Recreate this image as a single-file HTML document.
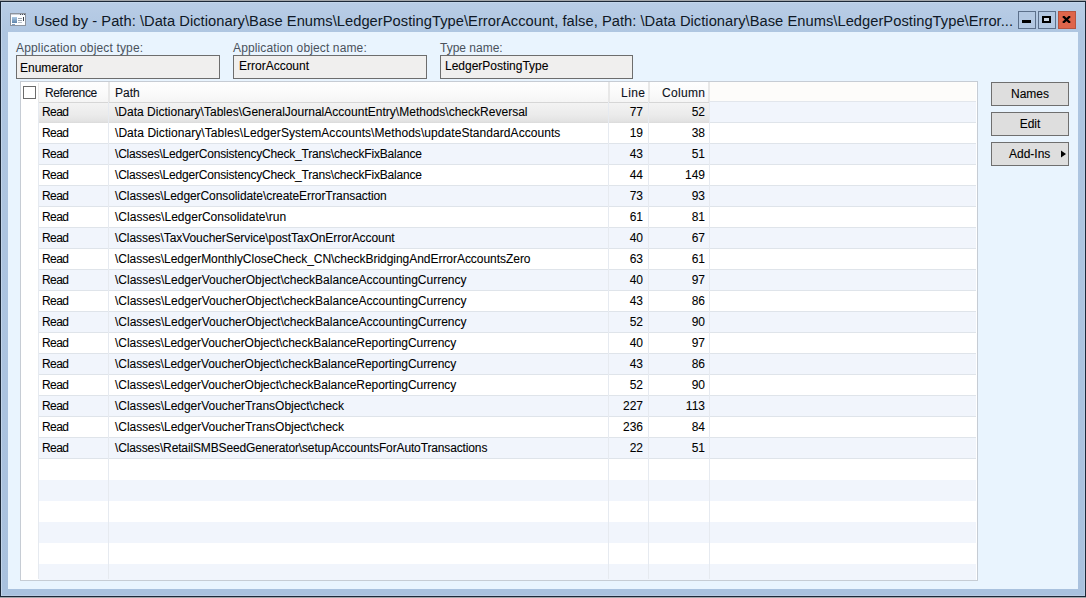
<!DOCTYPE html>
<html><head><meta charset="utf-8">
<style>
html,body{margin:0;padding:0;}
body{width:1086px;height:598px;position:relative;overflow:hidden;background:#a3a6aa;font-family:"Liberation Sans",sans-serif;}
.win{position:absolute;left:0;top:1px;width:1086px;height:596px;background:#1c2838;}
.frame{position:absolute;left:1px;top:2px;width:1084px;height:594px;background:linear-gradient(#b9cde6 0px,#afc6e1 30px,#a9c1de 100%);box-shadow:inset 1px 1px 0 #c3d5ea, inset -1px -1px 0 #b8cbe3;}
.content{position:absolute;left:8px;top:32px;width:1070px;height:557px;background:#e9f4fe;}
.title{position:absolute;left:34px;top:11px;font-size:14.7px;color:#0f1826;letter-spacing:0.036px;white-space:nowrap;line-height:20px;}
.tb{position:absolute;top:11px;width:16px;height:16px;border:1px solid #5c708b;background:#b3c8e2;}
.lbl{position:absolute;top:41px;font-size:12px;color:#4a525c;white-space:nowrap;line-height:15px;}
.fld{position:absolute;top:55px;height:22px;border:1px solid #6d6d6d;background:#f0efee;font-size:12px;color:#000;-webkit-text-stroke:0.2px rgba(0,0,0,0.5);line-height:24px;padding-left:3px;box-sizing:content-box;white-space:nowrap;}
.grid{position:absolute;left:20px;top:81px;width:956px;height:498px;border:1px solid #c6ccd4;background:#fff;overflow:hidden;}
.hdr{position:absolute;left:39px;top:82px;width:670px;height:20px;background:linear-gradient(#fefefe,#fbfbfb 50%,#f5f5f5);border-bottom:1px solid #d6d6d6;}
.hsep{position:absolute;top:82px;width:2px;height:20px;background:#e8e8e8;}
.ht{position:absolute;top:83px;font-size:12px;color:#0c1322;-webkit-text-stroke:0.2px rgba(0,0,0,0.5);line-height:20px;white-space:nowrap;}
.r{position:absolute;left:21px;width:955px;background:#fff;}
.r.blue{background:#f1f5fc;}
.hl{position:absolute;left:39px;width:937px;height:1px;background:#dfe4ea;}
.sel{position:absolute;left:39px;width:670px;background:linear-gradient(#f3f3f3,#ebebeb 60%,#e3e3e3 90%,#dadada);}
.vl{position:absolute;top:102px;height:477px;z-index:1;width:1px;background:#e6eaf0;}
.chk{position:absolute;left:23px;top:86px;width:11px;height:11px;border:1px solid #6b6b6b;background:#fff;}
.t{position:absolute;font-size:12px;color:#000;-webkit-text-stroke:0.15px rgba(0,0,0,0.6);line-height:21px;white-space:nowrap;}
.btn{position:absolute;left:991px;width:76px;height:22px;border:1px solid #6f6f6f;background:#dedede;font-size:12px;color:#000;-webkit-text-stroke:0.2px rgba(0,0,0,0.5);line-height:22px;text-align:center;}
.cbar{position:absolute;left:21px;top:82px;width:18px;height:498px;background:#fff;}
</style></head><body>
<div class="win"></div>
<div class="frame"></div>
<svg style="position:absolute;left:10px;top:13px" width="16" height="13" viewBox="0 0 16 13" shape-rendering="crispEdges">
 <defs><linearGradient id="ig" x1="0" y1="0" x2="0" y2="1"><stop offset="0" stop-color="#a9c8e4"/><stop offset="1" stop-color="#5e84ab"/></linearGradient></defs>
 <rect x="0" y="0" width="16" height="13" fill="#8c939d"/>
 <rect x="1" y="1" width="14" height="11" fill="#fbfdff"/>
 <rect x="1" y="1" width="14" height="1" fill="#c9ced6"/>
 <rect x="10" y="1" width="1" height="1" fill="#4a505a"/><rect x="12" y="1" width="1" height="1" fill="#4a505a"/><rect x="14" y="1" width="1" height="1" fill="#4a505a"/>
 <rect x="2" y="4" width="5" height="6" fill="url(#ig)"/>
 <rect x="8" y="5" width="4" height="1" fill="#9aa3ae"/>
 <rect x="8" y="7" width="4" height="1" fill="#9aa3ae"/>
 <rect x="8" y="9" width="4" height="1" fill="#b8c0ca"/>
 <rect x="13" y="4" width="1" height="4" fill="#3a414b"/>
 <rect x="2" y="11" width="3" height="1" fill="#7d9cc0"/>
</svg>
<div class="title">Used by - Path: \Data Dictionary\Base Enums\LedgerPostingType\ErrorAccount, false, Path: \Data Dictionary\Base Enums\LedgerPostingType\Error...</div>
<div class="tb" style="left:1018px"><div style="position:absolute;left:3px;top:8px;width:9px;height:3px;background:#000"></div></div>
<div class="tb" style="left:1038px"><div style="position:absolute;left:3px;top:4px;width:5px;height:3px;border:2px solid #000;border-top-width:2px;background:#cdd8e4"></div></div>
<div class="tb" style="left:1058px;background:#de654b;border-color:#b6543f"><svg style="position:absolute;left:3px;top:4px" width="9" height="7" viewBox="0 0 9 7"><path d="M1 0.2 L8 6.8 M8 0.2 L1 6.8" stroke="#000" stroke-width="2.3"/></svg></div>
<div class="content"></div>
<div class="lbl" style="left:16px;letter-spacing:0.16px">Application object type:</div>
<div class="lbl" style="left:233px;letter-spacing:0.13px">Application object name:</div>
<div class="lbl" style="left:440px">Type name:</div>
<div class="fld" style="left:16px;width:199px">Enumerator</div>
<div class="fld" style="left:233px;width:187px;padding-left:5px;line-height:20px">ErrorAccount</div>
<div class="fld" style="left:440px;width:187px;padding-left:4px;line-height:20px">LedgerPostingType</div>
<div class="grid"></div>
<div class="r blue" style="top:102px;height:21px"></div><div class="hl" style="top:122px"></div><div class="r" style="top:123px;height:21px"></div><div class="hl" style="top:143px"></div><div class="r blue" style="top:144px;height:21px"></div><div class="hl" style="top:164px"></div><div class="r" style="top:165px;height:21px"></div><div class="hl" style="top:185px"></div><div class="r blue" style="top:186px;height:21px"></div><div class="hl" style="top:206px"></div><div class="r" style="top:207px;height:21px"></div><div class="hl" style="top:227px"></div><div class="r blue" style="top:228px;height:21px"></div><div class="hl" style="top:248px"></div><div class="r" style="top:249px;height:21px"></div><div class="hl" style="top:269px"></div><div class="r blue" style="top:270px;height:21px"></div><div class="hl" style="top:290px"></div><div class="r" style="top:291px;height:21px"></div><div class="hl" style="top:311px"></div><div class="r blue" style="top:312px;height:21px"></div><div class="hl" style="top:332px"></div><div class="r" style="top:333px;height:21px"></div><div class="hl" style="top:353px"></div><div class="r blue" style="top:354px;height:21px"></div><div class="hl" style="top:374px"></div><div class="r" style="top:375px;height:21px"></div><div class="hl" style="top:395px"></div><div class="r blue" style="top:396px;height:21px"></div><div class="hl" style="top:416px"></div><div class="r" style="top:417px;height:21px"></div><div class="hl" style="top:437px"></div><div class="r blue" style="top:438px;height:21px"></div><div class="hl" style="top:458px"></div><div class="r" style="top:459px;height:21px"></div><div class="r blue" style="top:480px;height:21px"></div><div class="r" style="top:501px;height:21px"></div><div class="r blue" style="top:522px;height:21px"></div><div class="r" style="top:543px;height:21px"></div><div class="r blue" style="top:564px;height:16px"></div><div class="sel" style="top:103px;height:20px"></div><div class="vl" style="left:38px"></div><div class="vl" style="left:108px"></div><div class="vl" style="left:608px"></div><div class="vl" style="left:648px"></div><div class="vl" style="left:709px"></div><div class="t" style="top:102px;left:42px;letter-spacing:-0.6px">Read</div><div class="t" style="top:102px;left:115px;letter-spacing:0.014px">\Data Dictionary\Tables\GeneralJournalAccountEntry\Methods\checkReversal</div><div class="t rt" style="top:102px;right:443px">77</div><div class="t rt" style="top:102px;right:381px">52</div><div class="t" style="top:123px;left:42px;letter-spacing:-0.6px">Read</div><div class="t" style="top:123px;left:115px;letter-spacing:0.060px">\Data Dictionary\Tables\LedgerSystemAccounts\Methods\updateStandardAccounts</div><div class="t rt" style="top:123px;right:443px">19</div><div class="t rt" style="top:123px;right:381px">38</div><div class="t" style="top:144px;left:42px;letter-spacing:-0.6px">Read</div><div class="t" style="top:144px;left:115px;letter-spacing:-0.194px">\Classes\LedgerConsistencyCheck_Trans\checkFixBalance</div><div class="t rt" style="top:144px;right:443px">43</div><div class="t rt" style="top:144px;right:381px">51</div><div class="t" style="top:165px;left:42px;letter-spacing:-0.6px">Read</div><div class="t" style="top:165px;left:115px;letter-spacing:-0.194px">\Classes\LedgerConsistencyCheck_Trans\checkFixBalance</div><div class="t rt" style="top:165px;right:443px">44</div><div class="t rt" style="top:165px;right:381px">149</div><div class="t" style="top:186px;left:42px;letter-spacing:-0.6px">Read</div><div class="t" style="top:186px;left:115px;letter-spacing:-0.082px">\Classes\LedgerConsolidate\createErrorTransaction</div><div class="t rt" style="top:186px;right:443px">73</div><div class="t rt" style="top:186px;right:381px">93</div><div class="t" style="top:207px;left:42px;letter-spacing:-0.6px">Read</div><div class="t" style="top:207px;left:115px;letter-spacing:0.013px">\Classes\LedgerConsolidate\run</div><div class="t rt" style="top:207px;right:443px">61</div><div class="t rt" style="top:207px;right:381px">81</div><div class="t" style="top:228px;left:42px;letter-spacing:-0.6px">Read</div><div class="t" style="top:228px;left:115px;letter-spacing:-0.067px">\Classes\TaxVoucherService\postTaxOnErrorAccount</div><div class="t rt" style="top:228px;right:443px">40</div><div class="t rt" style="top:228px;right:381px">67</div><div class="t" style="top:249px;left:42px;letter-spacing:-0.6px">Read</div><div class="t" style="top:249px;left:115px;letter-spacing:-0.039px">\Classes\LedgerMonthlyCloseCheck_CN\checkBridgingAndErrorAccountsZero</div><div class="t rt" style="top:249px;right:443px">63</div><div class="t rt" style="top:249px;right:381px">61</div><div class="t" style="top:270px;left:42px;letter-spacing:-0.6px">Read</div><div class="t" style="top:270px;left:115px;letter-spacing:0.000px">\Classes\LedgerVoucherObject\checkBalanceAccountingCurrency</div><div class="t rt" style="top:270px;right:443px">40</div><div class="t rt" style="top:270px;right:381px">97</div><div class="t" style="top:291px;left:42px;letter-spacing:-0.6px">Read</div><div class="t" style="top:291px;left:115px;letter-spacing:0.000px">\Classes\LedgerVoucherObject\checkBalanceAccountingCurrency</div><div class="t rt" style="top:291px;right:443px">43</div><div class="t rt" style="top:291px;right:381px">86</div><div class="t" style="top:312px;left:42px;letter-spacing:-0.6px">Read</div><div class="t" style="top:312px;left:115px;letter-spacing:0.000px">\Classes\LedgerVoucherObject\checkBalanceAccountingCurrency</div><div class="t rt" style="top:312px;right:443px">52</div><div class="t rt" style="top:312px;right:381px">90</div><div class="t" style="top:333px;left:42px;letter-spacing:-0.6px">Read</div><div class="t" style="top:333px;left:115px;letter-spacing:-0.052px">\Classes\LedgerVoucherObject\checkBalanceReportingCurrency</div><div class="t rt" style="top:333px;right:443px">40</div><div class="t rt" style="top:333px;right:381px">97</div><div class="t" style="top:354px;left:42px;letter-spacing:-0.6px">Read</div><div class="t" style="top:354px;left:115px;letter-spacing:-0.052px">\Classes\LedgerVoucherObject\checkBalanceReportingCurrency</div><div class="t rt" style="top:354px;right:443px">43</div><div class="t rt" style="top:354px;right:381px">86</div><div class="t" style="top:375px;left:42px;letter-spacing:-0.6px">Read</div><div class="t" style="top:375px;left:115px;letter-spacing:-0.052px">\Classes\LedgerVoucherObject\checkBalanceReportingCurrency</div><div class="t rt" style="top:375px;right:443px">52</div><div class="t rt" style="top:375px;right:381px">90</div><div class="t" style="top:396px;left:42px;letter-spacing:-0.6px">Read</div><div class="t" style="top:396px;left:115px;letter-spacing:-0.033px">\Classes\LedgerVoucherTransObject\check</div><div class="t rt" style="top:396px;right:443px">227</div><div class="t rt" style="top:396px;right:381px">113</div><div class="t" style="top:417px;left:42px;letter-spacing:-0.6px">Read</div><div class="t" style="top:417px;left:115px;letter-spacing:-0.033px">\Classes\LedgerVoucherTransObject\check</div><div class="t rt" style="top:417px;right:443px">236</div><div class="t rt" style="top:417px;right:381px">84</div><div class="t" style="top:438px;left:42px;letter-spacing:-0.6px">Read</div><div class="t" style="top:438px;left:115px;letter-spacing:-0.138px">\Classes\RetailSMBSeedGenerator\setupAccountsForAutoTransactions</div><div class="t rt" style="top:438px;right:443px">22</div><div class="t rt" style="top:438px;right:381px">51</div>
<div class="cbar"></div>
<div class="hdr"></div>
<div style="position:absolute;left:710px;top:82px;width:266px;height:19px;background:#fdfcfa;border-bottom:1px solid #e2e6ec"></div>
<div class="hsep" style="left:38px;width:1px;top:83px;height:19px"></div>
<div class="hsep" style="left:108px"></div>
<div class="hsep" style="left:608px"></div>
<div class="hsep" style="left:648px"></div>
<div class="hsep" style="left:708px"></div>
<div class="chk"></div>
<div class="ht" style="left:45px;letter-spacing:-0.4px">Reference</div>
<div class="ht" style="left:115px">Path</div>
<div class="ht" style="right:440.6px;letter-spacing:0.4px">Line</div>
<div class="ht" style="right:380.65px;letter-spacing:0.35px">Column</div>
<div class="btn" style="top:82px">Names</div>
<div class="btn" style="top:112px">Edit</div>
<div class="btn" style="top:142px"><span style="position:absolute;left:17px;">Add-Ins</span><svg style="position:absolute;left:69px;top:7px" width="5" height="8" viewBox="0 0 5 8"><path d="M0 0.5 L5 4 L0 7.5 Z" fill="#000"/></svg></div>
</body></html>
